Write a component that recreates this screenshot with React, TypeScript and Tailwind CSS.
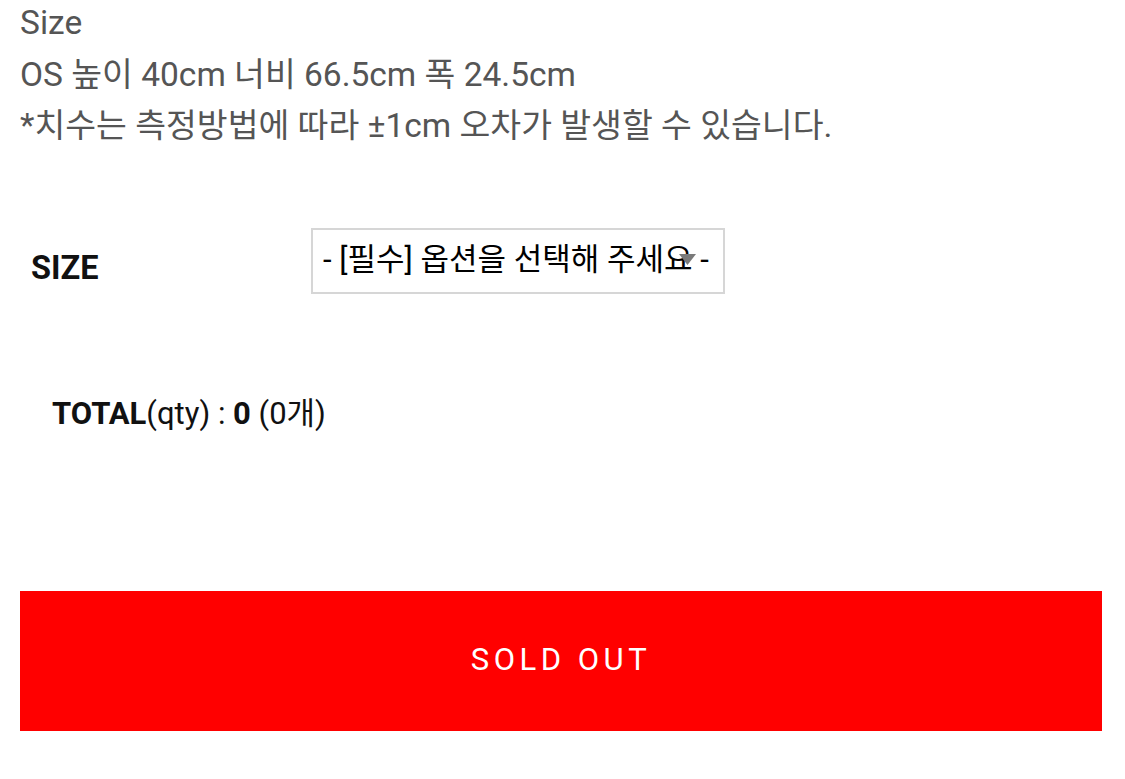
import React from "react";

export default function App() {
  const font = { fontFamily: 'Roboto, "Noto Sans CJK KR", sans-serif' };
  return (
    <div className="w-[1125px] h-[779px] bg-white overflow-hidden" style={font}>
      <div className="pl-[20px] pt-0 text-[33.5px] leading-[51.5px] text-[#555555] -mt-[3px]">
        <p>Size</p>
        <p>OS 높이 40cm 너비 66.5cm 폭 24.5cm</p>
        <p>*치수는 측정방법에 따라 ±1cm 오차가 발생할 수 있습니다.</p>
      </div>
      <div className="flex items-center mt-[76px] h-[66px]">
        <div className="w-[311px] pl-[31px] text-[32.5px] font-bold text-[#111] pt-[16px]">SIZE</div>
        <div className="relative w-[414px] h-[66px] border-2 border-[#d6d6d6] flex items-center pl-[10px] text-[31px] text-black">
          <span>- [필수] 옵션을 선택해 주세요 -</span>
          <svg className="absolute left-[366px] top-[24px]" width="17" height="11" viewBox="0 0 17 11">
            <polygon points="0,0 17,0 8.5,11" fill="#7a7a7a" />
          </svg>
        </div>
      </div>
      <div className="pl-[52px] mt-[100px] text-[31px] text-[#111] leading-[40px]">
        <span className="font-bold">TOTAL</span>
        <span>(qty) : </span>
        <span className="font-bold">0</span>
        <span> (0개)</span>
      </div>
      <div className="pl-[20px] pr-[23px] mt-[157px]">
        <button className="w-full h-[140px] bg-[#ff0000] text-white text-[31px] tracking-[4.5px] flex items-center justify-center">
          SOLD OUT
        </button>
      </div>
    </div>
  );
}
